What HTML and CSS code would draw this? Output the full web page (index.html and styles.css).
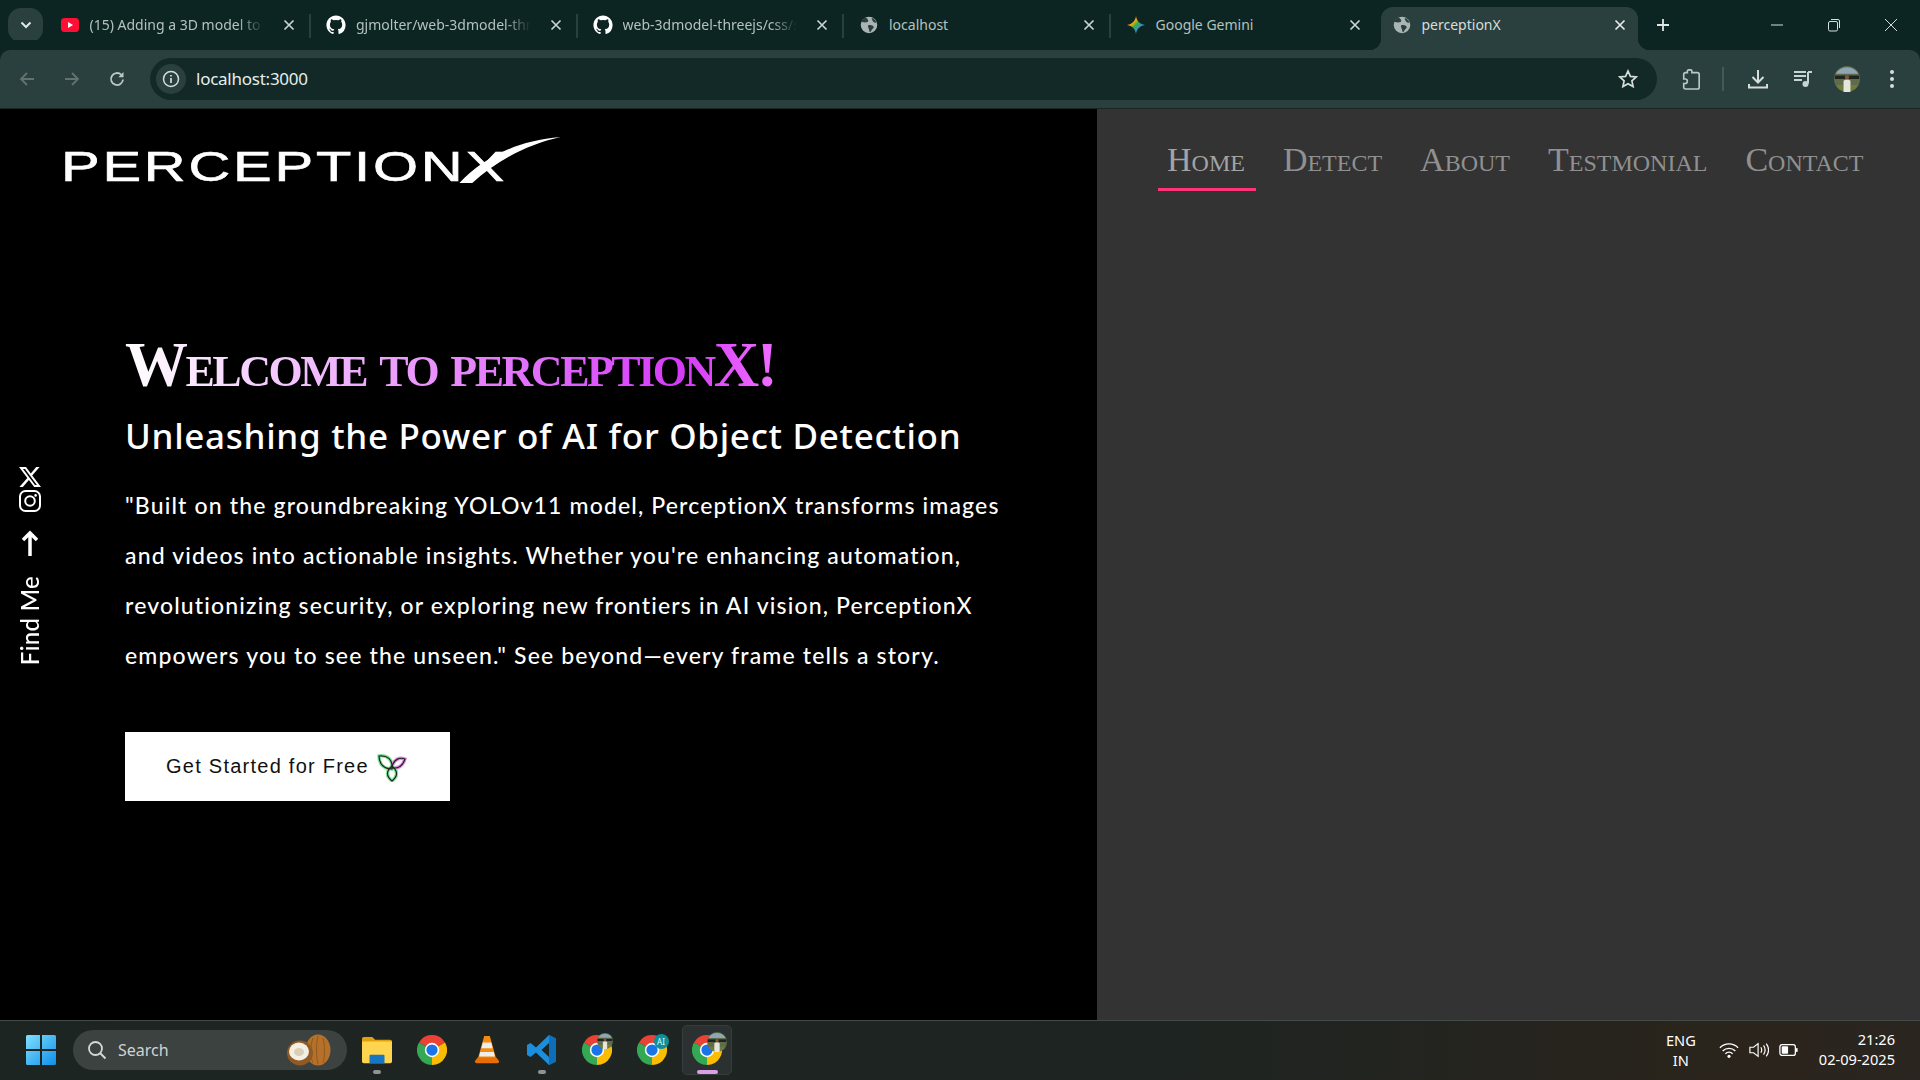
FILE: index.html
```html
<!DOCTYPE html>
<html lang="en">
<head>
<meta charset="utf-8">
<title>perceptionX</title>
<link rel="stylesheet" href="styles.css">
</head>
<body>
<svg class="defs" width="0" height="0">
  <defs>
    <symbol id="i-x" viewBox="0 0 12 12"><path d="M1.500 1.500l9 9M10.500 1.500l-9 9" stroke="currentColor" stroke-width="1.700" fill="none"/></symbol>
    <symbol id="i-globe" viewBox="0 0 24 24"><circle cx="12" cy="12" r="11" fill="#a9b4b3"/><path d="M8 1.800c1 2 3 2.500 3 4.500S8 8.500 6.500 8.500 3 7 1.500 8.500C2 5.500 4.500 3 8 1.800zM12 12c2 0 5 .5 6 2s-1 3-2 4-1 3-3 3.500c-1-2-.5-3-1.500-5S10 12 12 12zM16 2.500c3 1.200 5 3.500 6 6.500-2 0-4-.5-5-2.500s-2-2.500-1-4z" fill="#2a403e"/></symbol>
    <symbol id="i-github" viewBox="0 0 24 24"><path fill="#fff" d="M12 .5C5.650.5.500 5.650.500 12c0 5.080 3.290 9.380 7.860 10.900.58.100.79-.25.79-.56v-2c-3.200.7-3.870-1.540-3.870-1.540-.53-1.330-1.280-1.690-1.280-1.690-1.050-.71.08-.7.08-.7 1.160.08 1.770 1.190 1.770 1.190 1.030 1.770 2.700 1.260 3.360.96.1-.75.4-1.260.73-1.550-2.550-.29-5.240-1.280-5.240-5.690 0-1.260.45-2.280 1.190-3.090-.12-.29-.52-1.460.11-3.050 0 0 .97-.31 3.170 1.180a11 11 0 0 1 5.780 0c2.200-1.490 3.170-1.180 3.170-1.180.63 1.590.23 2.760.11 3.050.74.81 1.190 1.830 1.190 3.090 0 4.420-2.690 5.390-5.250 5.680.41.36.78 1.060.78 2.140v3.170c0 .31.21.67.8.56A11.500 11.500 0 0 0 23.500 12C23.500 5.650 18.350.5 12 .5z"/></symbol>
    <symbol id="i-chrome" viewBox="0 0 48 48">
      <path d="M24 24L3.200 12A24 24 0 0 1 44.800 12z" fill="#ea4335"/>
      <path d="M24 24L44.800 12A24 24 0 0 1 24 48z" fill="#fbbc04"/>
      <path d="M24 24L24 48A24 24 0 0 1 3.200 12z" fill="#34a853"/>
      <circle cx="24" cy="24" r="11.500" fill="#fff"/><circle cx="24" cy="24" r="9" fill="#1a73e8"/>
    </symbol>
    <symbol id="i-avatar" viewBox="0 0 30 30">
      <circle cx="15" cy="15" r="15" fill="#5f6b4a"/>
      <path d="M2 9A15 15 0 0 1 28 9z" fill="#8fa7b5"/>
      <path d="M1 11h28v4H1z" fill="#20241f"/>
      <path d="M2 22h26a15 15 0 0 1-26 0z" fill="#6d7b3c"/>
      <path d="M11 30v-13q4-3 8 0v13z" fill="#e6e6dc"/>
      <circle cx="15" cy="13" r="2.500" fill="#7b5a3c"/>
    </symbol>
  </defs>
</svg>

<header class="tabstrip">
  <button class="tab-search"><svg width="12" height="8" viewBox="0 0 12 8"><path d="M1.500 1.500L6 6l4.500-4.500" fill="none" stroke="#dfe7e5" stroke-width="2"/></svg></button>
  <div class="tabs">
    <div class="tab sep">
      <svg class="fav" viewBox="0 0 18 14"><rect width="18" height="14" rx="3.500" fill="#ff0f33"/><path d="M7 4l5 3-5 3z" fill="#fff"/></svg>
      <span class="tab-title">(15) Adding a 3D model to</span>
      <svg class="tab-close"><use href="#i-x"/></svg>
    </div>
    <div class="tab sep">
      <svg class="fav fav-gh"><use href="#i-github"/></svg>
      <span class="tab-title">gjmolter/web-3dmodel-thr</span>
      <svg class="tab-close"><use href="#i-x"/></svg>
    </div>
    <div class="tab sep">
      <svg class="fav fav-gh"><use href="#i-github"/></svg>
      <span class="tab-title">web-3dmodel-threejs/css/s</span>
      <svg class="tab-close"><use href="#i-x"/></svg>
    </div>
    <div class="tab sep">
      <svg class="fav"><use href="#i-globe"/></svg>
      <span class="tab-title plain">localhost</span>
      <svg class="tab-close"><use href="#i-x"/></svg>
    </div>
    <div class="tab">
      <svg class="fav" viewBox="0 0 20 20">
        <defs><linearGradient id="gem" x1="0" y1="0" x2="1" y2="1"><stop offset="0" stop-color="#ea4335"/><stop offset=".35" stop-color="#f9ab00"/><stop offset=".5" stop-color="#34a853"/><stop offset=".75" stop-color="#4285f4"/><stop offset="1" stop-color="#4285f4"/></linearGradient></defs>
        <path d="M10 0c.8 5.500 4 9 10 10-6 1-9.200 4.500-10 10-.8-5.500-4-9-10-10 6-1 9.200-4.500 10-10z" fill="url(#gem)"/>
      </svg>
      <span class="tab-title plain">Google Gemini</span>
      <svg class="tab-close"><use href="#i-x"/></svg>
    </div>
    <div class="tab active">
      <svg class="fav"><use href="#i-globe"/></svg>
      <span class="tab-title plain">perceptionX</span>
      <svg class="tab-close"><use href="#i-x"/></svg>
    </div>
  </div>
  <svg class="new-tab" viewBox="0 0 14 14"><path d="M7 1v12M1 7h12" stroke="#dfe7e5" stroke-width="1.800"/></svg>
  <div class="win-controls">
    <svg viewBox="0 0 14 14"><path d="M1 7h12" stroke="#d5dedb" stroke-width="1"/></svg>
    <svg viewBox="0 0 14 14"><rect x="1.500" y="3.500" width="9" height="9.500" rx="1.500" fill="none" stroke="#d5dedb"/><path d="M4 1.500h7q1.500 0 1.500 1.500v7" fill="none" stroke="#d5dedb"/></svg>
    <svg viewBox="0 0 14 14"><path d="M1 1l12 12M13 1L1 13" stroke="#d5dedb" stroke-width="1"/></svg>
  </div>
</header>

<nav class="toolbar">
  <div class="tool-nav">
    <svg viewBox="0 0 18 18"><path d="M16 9H3M9 3L3 9l6 6" fill="none" stroke="#62736f" stroke-width="1.800"/></svg>
    <svg viewBox="0 0 18 18"><path d="M2 9h13M9 3l6 6-6 6" fill="none" stroke="#62736f" stroke-width="1.800"/></svg>
    <svg viewBox="0 0 18 18"><path d="M15 9.500A6 6 0 1 1 13.200 4.700" fill="none" stroke="#bccac6" stroke-width="1.800"/><path d="M15.500 2v5.200h-5.200z" fill="#bccac6"/></svg>
  </div>
  <div class="omnibox">
    <span class="site-info"><svg viewBox="0 0 18 18"><circle cx="9" cy="9" r="7.500" fill="none" stroke="#d5dedb" stroke-width="1.500"/><path d="M9 8v5M9 5v1.600" stroke="#d5dedb" stroke-width="1.700"/></svg></span>
    <span class="url">localhost:3000</span>
    <svg class="star" viewBox="0 0 20 20"><path d="M10 2l2.400 5.400 5.800.6-4.300 3.900 1.200 5.700L10 14.700l-5.100 2.900 1.200-5.700L1.800 8l5.800-.6z" fill="none" stroke="#d5dedb" stroke-width="1.700"/></svg>
  </div>
  <div class="tool-actions">
    <svg class="ta-ext" viewBox="0 0 22 24"><path d="M7 5V3.500Q7 2 8.500 2h2Q12 2 12 3.500V5h6q2 0 2 2v14q0 2-2 2H5q-2 0-2-2v-4h1.500q2.500 0 2.500-2.500T4.500 12H3V7q0-2 2-2z" fill="none" stroke="#b9cac6" stroke-width="1.800"/></svg>
    <span class="ta-sep"></span>
    <svg class="ta-dl" viewBox="0 0 22 22"><path d="M11 2v12M5.500 9l5.500 5.500L16.500 9M2 16v3.500h18V16" fill="none" stroke="#d5dedb" stroke-width="2"/></svg>
    <svg class="ta-media" viewBox="0 0 20 20"><path d="M1 3h12M1 7h12M1 11h8" stroke="#c8d4d1" stroke-width="1.800"/><path d="M15 3v11.500" stroke="#c8d4d1" stroke-width="2"/><path d="M15 3h4" stroke="#c8d4d1" stroke-width="2"/><circle cx="12.500" cy="15" r="3" fill="#c8d4d1"/></svg>
    <svg class="ta-avatar"><use href="#i-avatar"/></svg>
    <svg class="ta-dots" viewBox="0 0 6 20"><circle cx="3" cy="3" r="2" fill="#d5dedb"/><circle cx="3" cy="10" r="2" fill="#d5dedb"/><circle cx="3" cy="17" r="2" fill="#d5dedb"/></svg>
  </div>
</nav>

<main class="page">
  <section class="left">
    <div class="logo">
      <span class="logo-text">PERCEPTIONX</span>
      <svg class="logo-swoosh" viewBox="0 0 110 50"><path d="M0 50C25 24 60 4 110 0 74 8 40 26 14 50z" fill="#fff"/></svg>
    </div>
    <div class="hero">
      <h1 class="hero-title">Welcome to perceptionX!</h1>
      <h2 class="hero-sub">Unleashing the Power of AI for Object Detection</h2>
      <p class="hero-text">"Built on the groundbreaking YOLOv11 model, PerceptionX transforms images<br>and videos into actionable insights. Whether you're enhancing automation,<br>revolutionizing security, or exploring new frontiers in AI vision, PerceptionX<br>empowers you to see the unseen." See beyond—every frame tells a story.</p>
      <a class="cta">Get Started for Free
        <svg class="cta-icon" viewBox="0 0 30 28">
          <g fill="none" stroke-width="3.500" opacity=".65">
            <path d="M2 2c8-1 14 3 13 13C7 15 2 10 2 2z" stroke="#37d860"/>
            <path d="M28 5c-5-2-12 0-13 9 7 1 11-3 13-9z" stroke="#e040e0"/>
            <path d="M15 27c-6-5-6-10 0-15 6 5 6 10 0 15z" stroke="#37d860"/>
          </g>
          <g fill="none" stroke="#222" stroke-width="1.200">
            <path d="M2 2c8-1 14 3 13 13C7 15 2 10 2 2z"/>
            <path d="M28 5c-5-2-12 0-13 9 7 1 11-3 13-9z"/>
            <path d="M15 27c-6-5-6-10 0-15 6 5 6 10 0 15z"/>
          </g>
        </svg>
      </a>
    </div>
    <aside class="social">
      <svg class="soc-x" viewBox="0 0 24 24"><path fill="#fff" d="M18.200 2h3.400l-7.400 8.500L23 22h-6.800l-5.300-7-6.100 7H1.400l7.900-9.100L1 2h7l4.800 6.400zm-1.200 18h1.900L7 3.900H5z"/></svg>
      <svg class="soc-ig" viewBox="0 0 24 24"><rect x="2" y="2" width="20" height="20" rx="5.500" fill="none" stroke="#fff" stroke-width="2"/><circle cx="12" cy="12" r="4.800" fill="none" stroke="#fff" stroke-width="2"/><circle cx="17.600" cy="6.400" r="1.300" fill="#fff"/></svg>
      <svg class="soc-arrow" viewBox="0 0 16 26"><path d="M8 26V3M1 10l7-7 7 7" fill="none" stroke="#fff" stroke-width="3.500"/></svg>
      <span class="soc-label">Find Me</span>
    </aside>
  </section>
  <section class="right">
    <ul class="menu">
      <li class="menu-item current">Home</li>
      <li class="menu-item">Detect</li>
      <li class="menu-item">About</li>
      <li class="menu-item">Testmonial</li>
      <li class="menu-item">Contact</li>
    </ul>
  </section>
</main>

<footer class="taskbar">
  <svg class="tb-start" viewBox="0 0 30 30">
    <defs><linearGradient id="win" x1="0" y1="0" x2="1" y2="1"><stop offset="0" stop-color="#7fe0ff"/><stop offset="1" stop-color="#0f8fe8"/></linearGradient></defs>
    <path d="M0 1.500Q0 0 1.500 0H14v14H0zM16 0h12.500Q30 0 30 1.500V14H16zM0 16h14v14H1.500Q0 30 0 28.500zM16 16h14v12.500q0 1.500-1.500 1.500H16z" fill="url(#win)"/>
  </svg>
  <div class="tb-search">
    <svg viewBox="0 0 20 20"><circle cx="8.500" cy="8.500" r="6.500" fill="none" stroke="#d5d8d8" stroke-width="1.800"/><path d="M13 13l5.500 5.500" stroke="#d5d8d8" stroke-width="2"/></svg>
    <span class="tb-search-text">Search</span>
    <svg class="tb-coconut" viewBox="0 0 46 32">
      <ellipse cx="32" cy="16" rx="12.500" ry="15.500" fill="#b5702a"/>
      <path d="M32 2c-2 8-2 20 0 28M27 4c-3 8-3 18 0 25M37 4c2 8 2 18 0 25" stroke="#8f5a20" fill="none"/>
      <ellipse cx="14" cy="19" rx="13" ry="12.500" fill="#8f5a24"/>
      <ellipse cx="13" cy="17.500" rx="10" ry="9" fill="#f4efe3"/>
      <ellipse cx="13" cy="18" rx="5" ry="4" fill="#d9cfb8"/>
    </svg>
  </div>
  <div class="tb-apps">
    <div class="tb-app running">
      <svg viewBox="0 0 32 28"><path d="M0 2q0-2 2-2h9l3 3h16q2 0 2 2v3H0z" fill="#dfa20c"/><path d="M0 5h32v21q0 2-2 2H2q-2 0-2-2z" fill="#ffd54f"/><path d="M9 19h14q1 0 1 1v8H8v-8q0-1 1-1z" fill="#1676c4"/></svg>
    </div>
    <div class="tb-app"><svg><use href="#i-chrome"/></svg></div>
    <div class="tb-app">
      <svg viewBox="0 0 28 32"><path d="M11 1h6l7 25H4z" fill="#f58b0d"/><path d="M9.500 8h9l1.500 6H8zM6.800 18h14.400l1.200 5H5.600z" fill="#eee"/><path d="M4 24h20l3 4q0 2-2 2H3q-2 0-2-2z" fill="#e96d05"/></svg>
    </div>
    <div class="tb-app running">
      <svg viewBox="0 0 30 30"><path d="M22 0l7 3.500v23L22 30 9 17.500 3.500 22 0 20v-10l3.500-2L9 12.500zM22 8l-7.500 7 7.500 7z" fill="#1b8fdc"/><path d="M22 0l7 3.500v23L22 30z" fill="#0d6fb8"/></svg>
    </div>
    <div class="tb-app with-badge"><svg><use href="#i-chrome"/></svg><svg class="badge badge-a"><use href="#i-avatar"/></svg></div>
    <div class="tb-app with-badge"><svg><use href="#i-chrome"/></svg><span class="badge badge-ai">AI</span></div>
    <div class="tb-app active with-badge"><svg><use href="#i-chrome"/></svg><svg class="badge badge-b"><use href="#i-avatar"/></svg></div>
  </div>
  <div class="tb-tray">
    <div class="tb-lang"><span>ENG</span><span>IN</span></div>
    <div class="tb-sys">
      <svg viewBox="0 0 22 18"><path d="M1 6.500a14 14 0 0 1 20 0M4 10a10 10 0 0 1 14 0M7 13a6 6 0 0 1 8 0" fill="none" stroke="#fff" stroke-width="1.500"/><circle cx="11" cy="16" r="1.700" fill="#fff"/></svg>
      <svg viewBox="0 0 22 18"><path d="M1 6h4l5-4v14l-5-4H1z" fill="none" stroke="#fff" stroke-width="1.300"/><path d="M13 6q2 3 0 6M16 4q3.500 5 0 10M19 2q5 7 0 14" fill="none" stroke="#fff" stroke-width="1.300"/></svg>
      <svg viewBox="0 0 22 16"><rect x="1" y="2" width="17" height="12" rx="2.500" fill="none" stroke="#fff" stroke-width="1.400"/><rect x="3" y="4" width="7" height="8" rx="1" fill="#fff"/><path d="M19.500 6v4" stroke="#fff" stroke-width="2"/></svg>
    </div>
    <div class="tb-clock"><span>21:26</span><span>02-09-2025</span></div>
  </div>
</footer>
</body>
</html>
```

FILE: styles.css
```css
* { box-sizing: border-box; }
html, body { margin: 0; padding: 0; }
body {
  width: 1920px;
  height: 1080px;
  overflow: hidden;
  display: flex;
  flex-direction: column;
  background: #000;
  font-family: "Noto Sans", "Open Sans", sans-serif;
}
.defs { position: absolute; }

/* tab strip */
.tabstrip {
  height: 50px;
  flex: none;
  display: flex;
  align-items: flex-end;
  background: #0c2522;
}
.tab-search {
  width: 35px;
  height: 34px;
  margin: 8px 1.500px 0 8px;
  align-self: flex-start;
  border: 0;
  padding: 0;
  border-radius: 13px;
  background: #2a403e;
  display: flex;
  align-items: center;
  justify-content: center;
}
.tabs { display: flex; height: 43px; }
.tab {
  width: 266.500px;
  height: 43px;
  padding: 0 16px 7px 16px;
  display: flex;
  align-items: center;
  position: relative;
  color: #b4c2bf;
  font-size: 14px;
}
.tab.sep::after {
  content: "";
  position: absolute;
  right: 0;
  top: 7px;
  width: 2px;
  height: 24px;
  background: #2a403e;
}
.tab.active {
  width: 257px;
  margin-left: 3.500px;
  background: #2a403e;
  border-radius: 12px 12px 0 0;
  color: #d5dedb;
  padding: 0 12px 7px 12px;
}
.tab.active::before,
.tab.active::after {
  content: "";
  position: absolute;
  bottom: 0;
  width: 12px;
  height: 12px;
}
.tab.active::before { left: -12px; background: radial-gradient(circle at 0 0, transparent 12px, #2a403e 12.500px); }
.tab.active::after { right: -12px; background: radial-gradient(circle at 100% 0, transparent 12px, #2a403e 12.500px); }
.fav { width: 18px; height: 18px; flex: none; margin-right: 11px; }
.fav-gh { width: 20px; height: 20px; margin: 0 10px 0 -1px; }
.tab-title {
  flex: 1;
  white-space: nowrap;
  line-height: 20px;
  -webkit-mask-image: linear-gradient(90deg, #000 82%, transparent 96%);
  mask-image: linear-gradient(90deg, #000 82%, transparent 96%);
}
.tab-title.plain { -webkit-mask-image: none; mask-image: none; }
.tab-close { width: 12px; height: 12px; margin-left: 12px; flex: none; color: #c8d4d1; }
.tab.active .tab-close { color: #e4ebe9; }
.new-tab { width: 14px; height: 14px; margin: 0 0 18px 18px; flex: none; }
.win-controls {
  margin-left: auto;
  margin-right: 22px;
  display: flex;
  gap: 43px;
  align-self: center;
}
.win-controls svg { width: 14px; height: 14px; }

/* toolbar */
.toolbar {
  height: 59px;
  flex: none;
  display: flex;
  align-items: center;
  padding-bottom: 1px;
  background: #2a403e;
  border-radius: 10px 10px 0 0;
  border-bottom: 1px solid #1a2423;
  box-shadow: 0 -10px 0 #0c2522;
}
.tool-nav { display: flex; gap: 27px; padding-left: 18px; width: 150px; }
.tool-nav svg { width: 18px; height: 18px; }
.omnibox {
  width: 1507px;
  height: 42px;
  background: #132927;
  border-radius: 21px;
  display: flex;
  align-items: center;
  padding: 0 19px 0 6px;
}
.site-info {
  width: 30px;
  height: 30px;
  border-radius: 50%;
  background: #2a403e;
  display: flex;
  align-items: center;
  justify-content: center;
}
.site-info svg { width: 18px; height: 18px; }
.url { margin-left: 10px; color: #e6eeec; font-size: 17px; letter-spacing: -.25px; }
.star { width: 20px; height: 20px; margin-left: auto; }
.tool-actions { display: flex; align-items: center; flex: 1; padding-left: 24px; }
.ta-ext { width: 20px; height: 22px; }
.ta-sep { width: 2px; height: 24px; background: #43585a; margin: 0 23px 0 21px; }
.ta-dl { width: 22px; height: 22px; }
.ta-media { width: 20px; height: 20px; margin-left: 24px; }
.ta-avatar { width: 26px; height: 30px; margin-left: 21px; }
.ta-dots { width: 6px; height: 20px; margin-left: 29px; }

/* page */
.page { flex: 1; display: flex; min-height: 0; }
.left {
  width: 1097px;
  background: #000;
  position: relative;
  color: #fff;
  padding: 28px 0 0 63px;
}
.right { flex: 1; background: #333; }

.logo { height: 48px; position: relative; }
.logo-text {
  display: inline-block;
  font-family: "Liberation Sans", sans-serif;
  font-size: 42px;
  font-weight: 400;
  line-height: 48px;
  margin: 6px 0 0 -2px;
  transform-origin: 0 50%;
  transform: scaleX(1.380);
  letter-spacing: 2px;
  white-space: nowrap;
  -webkit-text-stroke: .6px #fff;
}
.logo-swoosh { position: absolute; left: 394px; top: 0; width: 106px; height: 46px; }

.hero { margin: 145px 0 0 62px; }
.hero-title {
  margin: 0;
  font-family: "Liberation Serif", serif;
  font-variant: small-caps;
  font-size: 63px;
  font-weight: 700;
  letter-spacing: -2.500px;
  line-height: 70px;
  width: 655px;
  white-space: nowrap;
  background: linear-gradient(90deg, #fff 0%, #d63af9 85%, #f070ff 100%);
  -webkit-background-clip: text;
  background-clip: text;
  color: transparent;
}
.hero-sub {
  margin: 13px 0 0;
  font-family: "Noto Sans", sans-serif;
  font-size: 35px;
  font-weight: 500;
  letter-spacing: .7px;
  line-height: 46px;
  white-space: nowrap;
}
.hero-text {
  margin: 21px 0 0;
  font-family: "Lato", sans-serif;
  font-size: 23px;
  font-weight: 500;
  letter-spacing: 1.150px;
  line-height: 50px;
  white-space: nowrap;
}
.cta {
  margin-top: 52px;
  width: 325px;
  height: 69px;
  background: #fff;
  display: flex;
  align-items: center;
  padding-left: 41px;
  color: #111;
  font-family: "Liberation Sans", sans-serif;
  font-size: 20px;
  letter-spacing: 1.250px;
}
.cta-icon { width: 30px; height: 28px; margin: 3px 0 0 8px; }

.social {
  position: absolute;
  left: 18px;
  top: 356px;
  width: 24px;
  display: flex;
  flex-direction: column;
  align-items: center;
}
.soc-x { width: 24px; height: 24px; }
.soc-ig { width: 24px; height: 24px; }
.soc-arrow { width: 16px; height: 26px; margin-top: 17px; }
.soc-label {
  writing-mode: vertical-rl;
  transform: rotate(180deg);
  margin-top: 20px;
  font-family: "Lato", sans-serif;
  font-size: 24px;
  font-weight: 500;
  line-height: 24px;
  letter-spacing: .3px;
  white-space: nowrap;
}

/* nav */
.menu {
  list-style: none;
  margin: 0;
  padding: 31px 0 0 61px;
  display: flex;
  gap: 20px;
}
.menu-item {
  height: 51px;
  padding: 0 9px;
  border-bottom: 3px solid transparent;
  color: #909090;
  font-family: "Liberation Serif", serif;
  font-variant: small-caps;
  font-size: 34px;
  line-height: 40px;
  white-space: nowrap;
}
.menu-item.current {
  padding-right: 11px;
  margin-right: -2px;
  border-bottom-color: #ff3377;
  color: #a3a3a3;
}

/* taskbar */
.taskbar {
  height: 60px;
  flex: none;
  display: flex;
  align-items: center;
  padding-bottom: 2px;
  background: linear-gradient(90deg, #1d2523 0%, #1e2422 60%, #2a241c 90%, #2a2520 100%);
  border-top: 1px solid #44494a;
  color: #fff;
}
.tb-start { width: 30px; height: 30px; margin-left: 26px; }
.tb-search {
  width: 274px;
  height: 40px;
  margin-left: 17px;
  border-radius: 20px;
  background: #3b4240;
  display: flex;
  align-items: center;
  padding: 0 14px;
  color: #d0d4d3;
  font-size: 16px;
}
.tb-search > svg:first-child { width: 20px; height: 20px; }
.tb-search-text { margin-left: 11px; }
.tb-coconut { width: 46px; height: 32px; margin-left: auto; margin-right: 1px; }
.tb-apps { display: flex; align-items: center; margin-left: 4.500px; gap: 5px; }
.tb-app {
  width: 50px;
  height: 50px;
  position: relative;
  display: flex;
  align-items: center;
  justify-content: center;
  border: 1px solid transparent;
  border-radius: 5px;
}
.tb-app > svg:first-child { width: 30px; height: 30px; }
.tb-app.running::after {
  content: "";
  position: absolute;
  left: 20px;
  bottom: 0;
  width: 8px;
  height: 4px;
  border-radius: 2px;
  background: #8f9492;
}
.tb-app.active { background: #2a3130; border-color: #373d3c; }
.tb-app.active::after {
  content: "";
  position: absolute;
  left: 14px;
  bottom: 0;
  width: 21px;
  height: 4px;
  border-radius: 2px;
  background: #d9a0e3;
}
.badge { position: absolute; }
.badge-a { width: 16px; height: 18px; right: 8px; top: 6px; }
.badge-b { width: 20px; height: 28px; right: 4px; top: 2px; }
.badge-ai {
  right: 7px;
  top: 8px;
  width: 15px;
  height: 15px;
  border-radius: 50%;
  background: #0e8f9c;
  color: #dff;
  font-size: 8px;
  line-height: 15px;
  text-align: center;
}
.tb-tray { margin-left: auto; display: flex; align-items: center; padding-right: 25px; font-size: 14.600px; }
.tb-lang { display: flex; flex-direction: column; align-items: center; line-height: 20px; }
.tb-sys { display: flex; align-items: center; gap: 10px; margin: 0 20px 0 23px; }
.tb-sys svg { width: 20px; height: 18px; }
.tb-clock { display: flex; flex-direction: column; align-items: flex-end; line-height: 20px; padding-bottom: 2px; }
```
